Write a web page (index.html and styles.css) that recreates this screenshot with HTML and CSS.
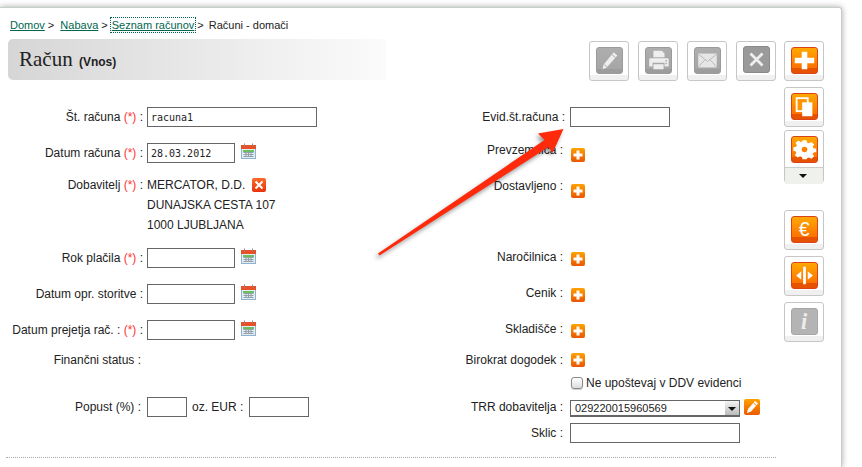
FILE: index.html
```html
<!DOCTYPE html>
<html lang="sl">
<head>
<meta charset="UTF-8" />
<meta name="viewport" content="width=device-width, initial-scale=1" />
<title>Račun (Vnos)</title>
<link rel="stylesheet" href="styles.css">
</head>
<body>

<svg class="sprites" width="0" height="0">
  <defs>
    <linearGradient id="small" x1="0" y1="0" x2="0" y2="1">
      <stop offset="0" stop-color="#ffa200"/>
      <stop offset="1" stop-color="#ea5400"/>
    </linearGradient>
    <symbol id="i-plus" viewBox="0 0 27 27"><path fill="#fff" d="M10.500 4h6v6.500H24v6h-7.500V23h-6v-6.500H3v-6h7.500z"/></symbol>
    <symbol id="i-pencil" viewBox="0 0 27 27">
      <path fill="#eee" d="M18 4.500l4 3.500-11.500 13L6 23l1-5z"/>
      <path fill="none" stroke="#a8a8a8" d="M16 7l4 3.500M8 18l3 2.500"/>
    </symbol>
    <symbol id="i-print" viewBox="0 0 27 27">
      <path fill="#eee" d="M8 3h9l3 3v4H8z"/>
      <path fill="#eee" d="M5 11h18a1.500 1.500 0 0 1 1.500 1.500V20H20v-4H7v4H3.500v-7.500A1.500 1.500 0 0 1 5 11z"/>
      <path fill="#eee" d="M8 17.500h11V23H8z"/>
      <path fill="#a8a8a8" d="M21 13h1.500v1.500H21zM21 16h1.500v1.500H21z"/>
    </symbol>
    <symbol id="i-mail" viewBox="0 0 27 27">
      <rect x="3.500" y="6" width="20" height="15" fill="#e6e6e6"/>
      <path fill="none" stroke="#b5b5b5" d="M3.500 6.500l10 8 10-8M3.500 20.500l7.500-8M23.500 20.500l-7.500-8"/>
    </symbol>
    <symbol id="i-close" viewBox="0 0 27 27"><path fill="none" stroke="#eee" stroke-width="3" d="M7 7l13 13M20 7L7 20"/></symbol>
    <symbol id="i-copy" viewBox="0 0 27 27">
      <rect x="5" y="4.500" width="12" height="14" fill="#ff9400" stroke="#fff" stroke-width="2"/>
      <rect x="11" y="9" width="11" height="15" fill="#fff"/>
    </symbol>
    <symbol id="i-gear" viewBox="0 0 27 27">
      <path fill="#fff" d="M11 2.500h5l.6 3.300 2.400 1 2.800-1.900 3.500 3.500-1.900 2.800 1 2.400 3.300.6v-.2 5l-3.300.6-1 2.400 1.900 2.800-3.500 3.500-2.800-1.900-2.400 1L16 29h-5l-.6-3.300-2.400-1-2.800 1.900-3.500-3.500 1.900-2.800-1-2.400L0 17.300v-5l3.300-.6 1-2.400-1.900-2.800 3.500-3.500L8.700 5l2.400-1z" transform="translate(1.500 1.500) scale(.89 .78)"/>
      <circle cx="13.500" cy="13.500" r="3" fill="#fb8000"/>
    </symbol>
    <symbol id="i-split" viewBox="0 0 27 27">
      <path fill="#fff" d="M12 4h3v19h-3zM10 9v9l-5.500-4.500zM17 9v9l5.500-4.500z"/>
    </symbol>
    <symbol id="i-small-plus" viewBox="0 0 14 14">
      <rect width="14" height="14" rx="2" fill="url(#small)"/>
      <path fill="#fff" d="M5.500 2.500h3v3h3v3h-3v3h-3v-3h-3v-3h3z"/>
    </symbol>
    <symbol id="i-cal" viewBox="0 0 15 16">
      <rect x="0.500" y="2.500" width="14" height="13" fill="#e2eef6" stroke="#8fb3cf"/>
      <rect x="0" y="2" width="15" height="4" fill="#e8502a"/>
      <rect x="2" y="7" width="11" height="2" fill="#6cc05c"/>
      <path fill="none" stroke="#93a0a8" d="M2.500 9.500h10M2.500 11.500h10M2.500 13.500h10M5 9v5M7.500 9v5M10 9v5"/>
      <path fill="none" stroke="#8a8a8a" d="M3.500 0.500v3M11.500 0.500v3"/>
    </symbol>
  </defs>
</svg>

<div class="card">
  <div class="crumbs">
    <a href="#">Domov</a><span class="sep">&gt;</span>
    <a href="#">Nabava</a><span class="sep">&gt;</span>
    <a href="#" class="focused">Seznam računov</a><span class="sep last">&gt;</span>
    <span>Računi - domači</span>
  </div>

  <div class="main">
    <div class="content">
      <div class="head">
        <h1>Račun <small>(Vnos)</small></h1>
        <div class="toolbar">
          <a class="btn" href="#"><span class="face grey"><svg><use href="#i-pencil"/></svg></span></a>
          <a class="btn" href="#"><span class="face grey"><svg><use href="#i-print"/></svg></span></a>
          <a class="btn" href="#"><span class="face grey"><svg><use href="#i-mail"/></svg></span></a>
          <a class="btn" href="#"><span class="face grey dark"><svg><use href="#i-close"/></svg></span></a>
        </div>
      </div>

      <div class="form">
        <div class="col col-left">
          <div class="row">
            <label>Št. računa <em>(*)</em> :</label>
            <input class="w170 mono" type="text" value="racuna1" />
          </div>
          <div class="row">
            <label>Datum računa <em>(*)</em> :</label>
            <input class="w88 mono" type="text" value="28.03.2012" />
            <svg class="cal"><use href="#i-cal"/></svg>
          </div>
          <div class="row">
            <label>Dobavitelj <em>(*)</em> :</label>
            <div class="address">
              <div>MERCATOR, D.D. <span class="remove"><svg viewBox="0 0 14 14"><path fill="none" stroke="#fff" stroke-width="2" d="M3.500 3.500l7 7M10.500 3.500l-7 7"/></svg></span></div>
              <div>DUNAJSKA CESTA 107</div>
              <div>1000 LJUBLJANA</div>
            </div>
          </div>
          <div class="row">
            <label>Rok plačila <em>(*)</em> :</label>
            <input class="w88" type="text" />
            <svg class="cal"><use href="#i-cal"/></svg>
          </div>
          <div class="row">
            <label>Datum opr. storitve :</label>
            <input class="w88" type="text" />
            <svg class="cal"><use href="#i-cal"/></svg>
          </div>
          <div class="row">
            <label>Datum prejetja rač. : <em>(*)</em> :</label>
            <input class="w88" type="text" />
            <svg class="cal"><use href="#i-cal"/></svg>
          </div>
          <div class="row">
            <label class="tight">Finančni status :</label>
          </div>
          <div class="row">
            <label class="tight">Popust (%) :</label>
            <input class="w40" type="text" />
            <span class="oz">oz. EUR :</span>
            <input class="w60" type="text" />
          </div>
        </div>

        <div class="col col-right">
          <div class="row">
            <label class="wide">Evid.št.računa :</label>
            <input class="w100" type="text" />
          </div>
          <div class="row">
            <label>Prevzemnica :</label>
            <svg class="plus low"><use href="#i-small-plus"/></svg>
          </div>
          <div class="row">
            <label>Dostavljeno :</label>
            <svg class="plus low"><use href="#i-small-plus"/></svg>
          </div>
          <div class="row">
            <label>Naročilnica :</label>
            <svg class="plus"><use href="#i-small-plus"/></svg>
          </div>
          <div class="row">
            <label>Cenik :</label>
            <svg class="plus"><use href="#i-small-plus"/></svg>
          </div>
          <div class="row">
            <label>Skladišče :</label>
            <svg class="plus"><use href="#i-small-plus"/></svg>
          </div>
          <div class="row">
            <label>Birokrat dogodek :</label>
            <svg class="plus high"><use href="#i-small-plus"/></svg>
          </div>
          <div class="row">
            <label></label>
            <span class="check"><input type="checkbox" /> Ne upoštevaj v DDV evidenci</span>
          </div>
          <div class="row">
            <label>TRR dobavitelja :</label>
            <div class="combo"><span>029220015960569</span><i></i></div>
            <span class="edit"><svg viewBox="0 0 16 16"><path fill="#fff" d="M11 2l3 2.500-7 8L3 14l1-4z"/><path fill="none" stroke="#f08000" d="M9.500 4l3 2.500"/></svg></span>
          </div>
          <div class="row">
            <label>Sklic :</label>
            <input class="w170" type="text" />
          </div>
        </div>
      </div>

      <hr />
    </div>

    <div class="rail">
      <a class="btn" href="#"><span class="face"><svg><use href="#i-plus"/></svg></span></a>
      <a class="btn" href="#"><span class="face"><svg><use href="#i-copy"/></svg></span></a>
      <a class="btn btn-menu" href="#"><span class="face"><svg><use href="#i-gear"/></svg></span><span class="caret"></span></a>
      <a class="btn" href="#"><span class="face"><svg viewBox="0 0 27 27"><text x="13" y="21" text-anchor="middle" class="euro">€</text></svg></span></a>
      <a class="btn" href="#"><span class="face"><svg><use href="#i-split"/></svg></span></a>
      <a class="btn" href="#"><span class="face grey light"><svg viewBox="0 0 27 27"><text x="13" y="22" text-anchor="middle" class="info">i</text></svg></span></a>
    </div>
  </div>
</div>

<!-- red arrow drawn over the form -->
<svg class="arrow" viewBox="0 0 862 467">
  <path fill="#ff2a0c" d="M563.500 129L538 133.500 544.500 140 378 253.500 379.500 255.500 548.500 147 552.500 153z"/>
</svg>

</body>
</html>
```

FILE: styles.css
```css
html, body { margin: 0; height: 467px; overflow: hidden; }
body { position: relative; background: #fff; font-family: "Liberation Sans", Arial, sans-serif; font-size: 12px; color: #222; padding-top: 7px; box-sizing: border-box; }
.sprites { position: absolute; }

.card {
  width: 842px;
  height: 460px;
  box-sizing: border-box;
  overflow: visible;
  background: #fff;
  border-top: 1px solid #c6d0c6;
  border-right: 1px solid #c6d0c6;
  border-top-right-radius: 3px;
  box-shadow: 0 0 6px rgba(0, 0, 0, 0.35);
}

.crumbs { height: 31px; padding: 8px 0 0 10px; box-sizing: border-box; font-size: 11px; line-height: 18px; white-space: nowrap; }
.crumbs a { color: #00664f; }
.crumbs .focused { outline: 1px dotted #00664f; outline-offset: 0; padding: 1px; margin-left: -3px; }
.crumbs .sep { margin: 0 3px 0 3px; }
.crumbs .sep.last { margin: 0 2px 0 2px; }

.main { display: flex; }
.content { width: 776px; }
.rail { width: 40px; margin-left: 8px; padding-top: 2px; display: flex; flex-direction: column; gap: 6px; }
.rail .btn-menu { margin-top: -3px; margin-bottom: 21px; }

.head { display: flex; justify-content: space-between; align-items: flex-start; margin-left: 8px; }
h1 {
  width: 378px;
  height: 41px;
  box-sizing: border-box;
  margin: 0;
  padding-left: 11px;
  font: normal 21px/41px "Liberation Serif", "Times New Roman", serif;
  color: #222;
  border-radius: 5px 0 0 5px;
  background: linear-gradient(90deg, #d6d6d6, #fbfbfb);
}
h1 small { font: bold 12px "Liberation Sans", Arial, sans-serif; margin-left: 1px; }
.toolbar { display: flex; gap: 9px; margin-top: 2px; }

.btn {
  display: block;
  width: 40px;
  height: 40px;
  box-sizing: border-box;
  border: 1px solid #c6c6c6;
  border-radius: 3px;
  background: linear-gradient(#fff 88%, #f0f0f0 88%);
  padding: 5px 6px;
}
.btn-menu { height: 53px; background: #fff; }
.face {
  display: block;
  width: 27px;
  height: 27px;
  box-sizing: border-box;
  border: 1px solid #d9431a;
  border-radius: 3px;
  background: linear-gradient(#ffa800, #fb7400 78%, #e65200 80%);
}
.face svg { display: block; width: 25px; height: 25px; }
.face.grey { background: linear-gradient(#aeaeae, #a6a6a6 85%, #9c9c9c 85%); border-color: #9a9a9a; }
.face.grey.dark { background: #9a9a9a; border-color: #8a8a8a; margin-top: -1px; }
.face.grey.light { background: #b4b4b4; border-color: #a6a6a6; }
.caret { display: block; margin: 4px -6px 0; height: 16px; border-top: 1px solid #ccc; background: #eff1ec; position: relative; }
.caret::after { content: ""; position: absolute; left: 14px; top: 6px; border: 4px solid transparent; border-top-color: #111; border-bottom: 0; }
.euro { font: 21px "Liberation Sans", Arial, sans-serif; fill: #fff; }
.info { font: italic bold 24px "Liberation Serif", serif; fill: #eee; }

.form { display: flex; margin-top: 26px; }
.col { display: grid; justify-items: start; }
.col-left { width: 400px; grid-template-rows: 36px 32px 73px 36px 36px 30px 47px 20px; }
.col-right { grid-template-rows: 33px 36px 71px 36px 36px 31px 23px 24px 26px 20px; }

.row { display: flex; align-items: flex-start; line-height: 20px; white-space: nowrap; }
label { display: block; text-align: right; flex: none; }
.col-left label { width: 143px; margin-right: 4px; }
.col-left label.tight { width: 141px; margin-right: 6px; }
.col-right label { width: 163px; margin-right: 7px; }
.col-right label.wide { width: 165px; margin-right: 5px; }
em { font-style: normal; color: #f33; }

input[type="text"] { height: 20px; box-sizing: border-box; border: 1px solid #666; padding: 0 3px; margin: 0; background: #fff; color: #222; }
input.mono { font: 10px "DejaVu Sans Mono", "Liberation Mono", monospace; }
.w40 { width: 40px; }
.w60 { width: 60px; }
.w88 { width: 88px; }
.w100 { width: 100px; }
.w170 { width: 170px; }

.cal { width: 15px; height: 16px; margin-left: 6px; }
.address div { height: 20px; }
.remove { display: inline-block; width: 14px; height: 14px; margin-left: 3px; vertical-align: -3px; border-radius: 2px; background: linear-gradient(#ff6a2a, #e8320c); }
.remove svg { display: block; width: 14px; height: 14px; }
.oz { margin: 0 6px 0 5px; }

.plus { width: 14px; height: 14px; margin: 5px 0 0 1px; }
.plus.low { margin-top: 8px; }
.plus.high { margin-top: 3px; }

.check { display: flex; align-items: center; gap: 3px; margin-left: 1px; }
.check input { appearance: none; width: 12px; height: 12px; margin: 0; border: 1px solid #888; border-radius: 3px; background: linear-gradient(#fff, #ddd); box-shadow: 0 1px 1px rgba(0, 0, 0, 0.2); }

.combo { width: 170px; height: 17px; box-sizing: border-box; margin-top: 3px; border: 1px solid #666; border-bottom-width: 2px; display: flex; justify-content: space-between; font-size: 11px; line-height: 15px; padding-left: 4px; }
.combo i { position: relative; width: 14px; background: linear-gradient(#f4f4f4, #bbb); }
.combo i::after { content: ""; position: absolute; left: 3px; top: 6px; border: 4px solid transparent; border-top-color: #111; border-bottom: 0; }
.edit { width: 16px; height: 16px; margin: 2px 0 0 4px; border-radius: 2px; background: linear-gradient(#ffa200, #ea5a00); }
.edit svg { display: block; width: 16px; height: 16px; }

hr { height: 0; margin: 14px 0 0 6px; border: 0; border-top: 1px dotted #aaa; }

.arrow { position: absolute; left: 0; top: 0; width: 862px; height: 467px; pointer-events: none; filter: drop-shadow(-2px 3px 2px rgba(0, 0, 0, 0.4)); }
```
